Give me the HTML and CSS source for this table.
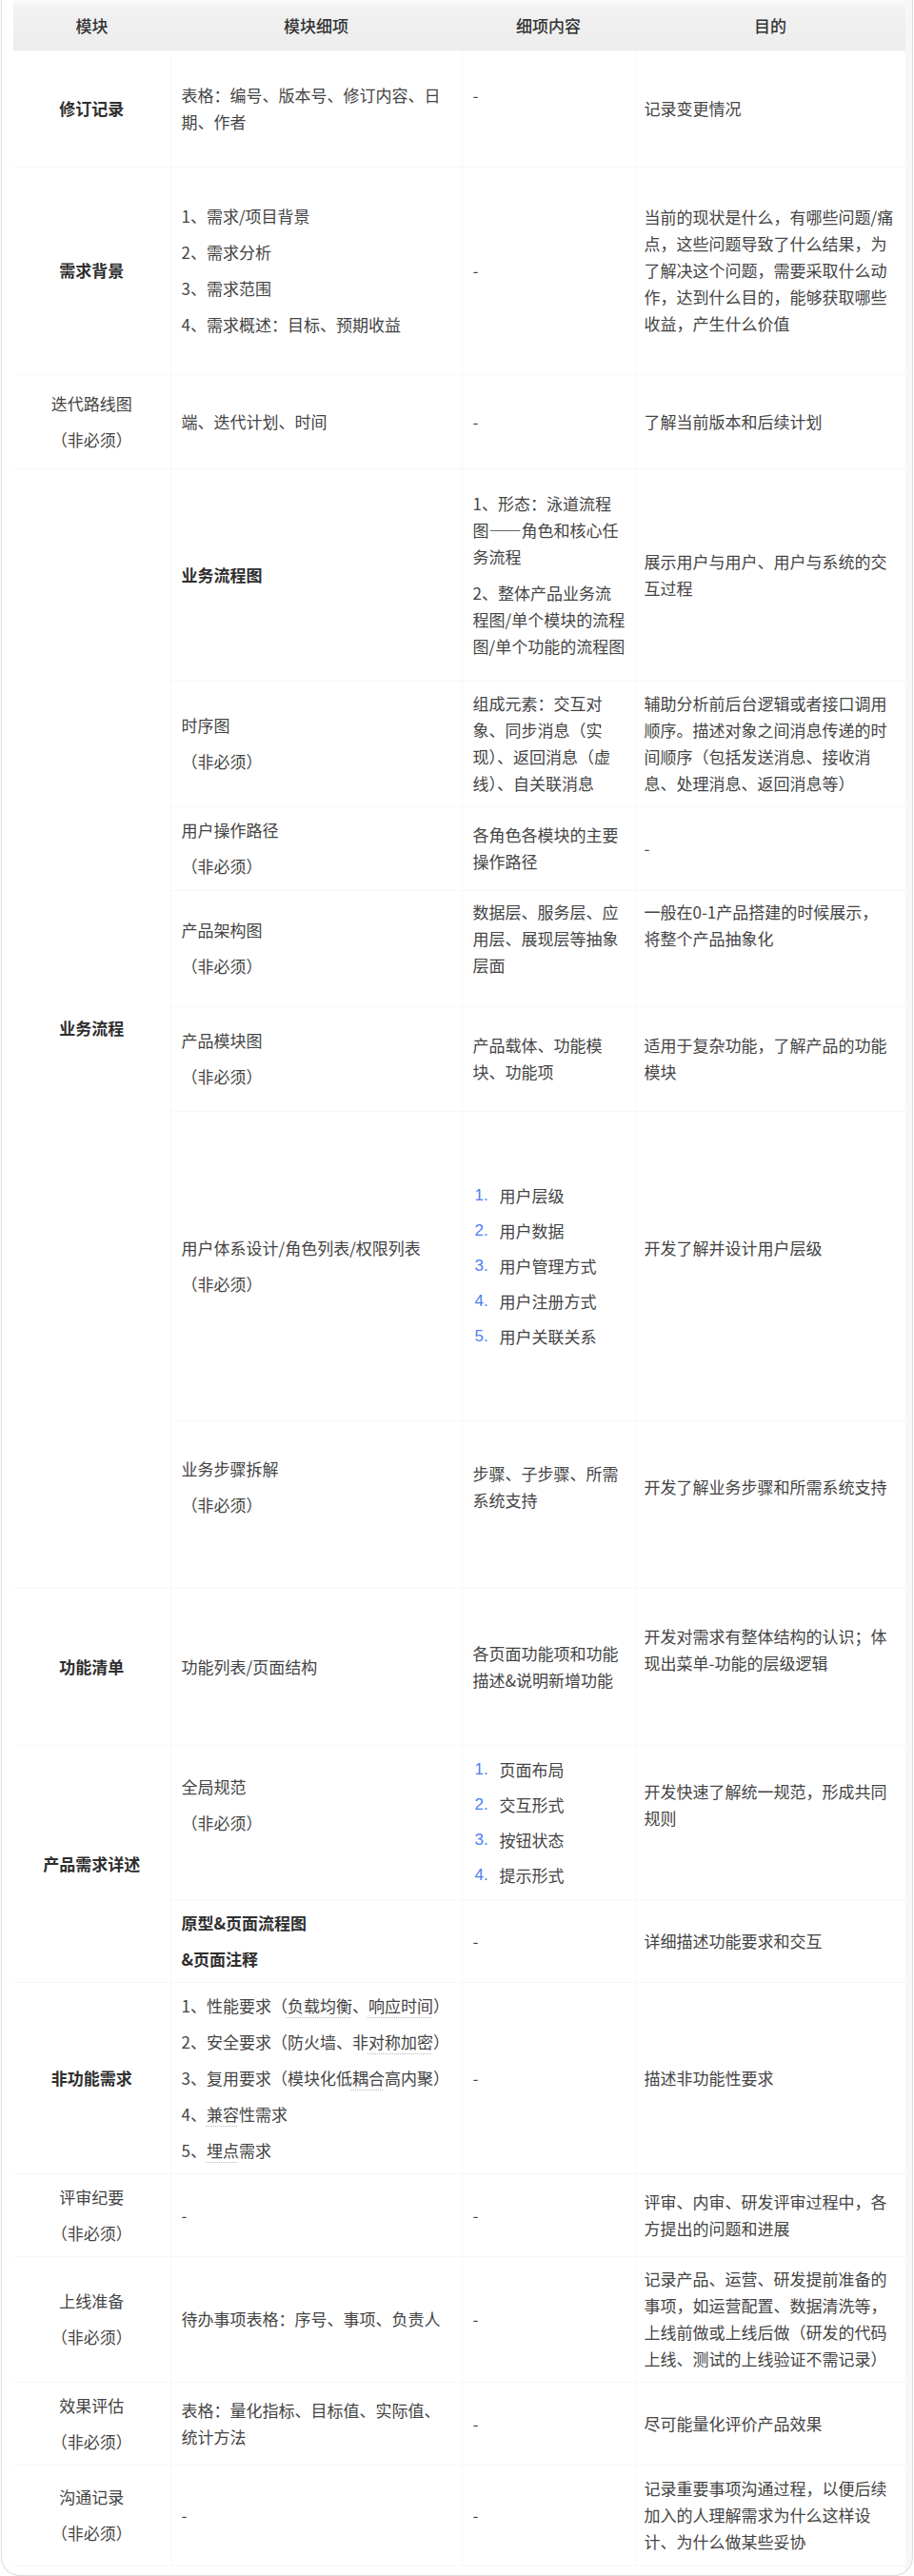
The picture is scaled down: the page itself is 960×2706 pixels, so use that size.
FILE: index.html
```html
<!DOCTYPE html>
<html lang="zh-CN">
<head>
<meta charset="utf-8">
<title>PRD 模块</title>
<link rel="stylesheet" href="styles.css">
</head>
<body>
<div class="frame">
<table class="prd">
<colgroup><col class="w1"><col class="w2"><col class="w3"><col class="w4"></colgroup>
<thead>
<tr class="head"><th>模块</th><th>模块细项</th><th>细项内容</th><th>目的</th></tr>
</thead>
<tbody>
<tr class="h122">
<td class="c1 b">修订记录</td>
<td class="c2">表格：编号、版本号、修订内容、日<br>期、作者</td>
<td class="c3 pb28">-</td>
<td class="c4">记录变更情况</td>
</tr>
<tr class="h218">
<td class="c1 b">需求背景</td>
<td class="c2"><p>1、需求/项目背景</p><p>2、需求分析</p><p>3、需求范围</p><p>4、需求概述：目标、预期收益</p></td>
<td class="c3">-</td>
<td class="c4">当前的现状是什么，有哪些问题/痛<br>点，这些问题导致了什么结果，为<br>了解决这个问题，需要采取什么动<br>作，达到什么目的，能够获取哪些<br>收益，产生什么价值</td>
</tr>
<tr class="h99">
<td class="c1"><p>迭代路线图</p><p>（非必须）</p></td>
<td class="c2">端、迭代计划、时间</td>
<td class="c3">-</td>
<td class="c4">了解当前版本和后续计划</td>
</tr>
<tr class="h223">
<td class="c1 b" rowspan="7">业务流程</td>
<td class="c2 b">业务流程图</td>
<td class="c3"><p>1、形态：泳道流程<br>图——角色和核心任<br>务流程</p><p>2、整体产品业务流<br>程图/单个模块的流程<br>图/单个功能的流程图</p></td>
<td class="c4">展示用户与用户、用户与系统的交<br>互过程</td>
</tr>
<tr class="h132">
<td class="c2"><p>时序图</p><p>（非必须）</p></td>
<td class="c3">组成元素：交互对<br>象、同步消息（实<br>现）、返回消息（虚<br>线）、自关联消息</td>
<td class="c4">辅助分析前后台逻辑或者接口调用<br>顺序。描述对象之间消息传递的时<br>间顺序（包括发送消息、接收消<br>息、处理消息、返回消息等）</td>
</tr>
<tr class="h88">
<td class="c2"><p>用户操作路径</p><p>（非必须）</p></td>
<td class="c3">各角色各模块的主要<br>操作路径</td>
<td class="c4">-</td>
</tr>
<tr class="h122">
<td class="c2"><p>产品架构图</p><p>（非必须）</p></td>
<td class="c3 pb20">数据层、服务层、应<br>用层、展现层等抽象<br>层面</td>
<td class="c4 pb48">一般在0-1产品搭建的时候展示，<br>将整个产品抽象化</td>
</tr>
<tr class="h110">
<td class="c2"><p>产品模块图</p><p>（非必须）</p></td>
<td class="c3">产品载体、功能模<br>块、功能项</td>
<td class="c4">适用于复杂功能，了解产品的功能<br>模块</td>
</tr>
<tr class="h325">
<td class="c2"><p>用户体系设计/角色列表/权限列表</p><p>（非必须）</p></td>
<td class="c3">
<div class="li"><span class="n">1.</span>用户层级</div>
<div class="li"><span class="n">2.</span>用户数据</div>
<div class="li"><span class="n">3.</span>用户管理方式</div>
<div class="li"><span class="n">4.</span>用户注册方式</div>
<div class="li"><span class="n">5.</span>用户关联关系</div>
</td>
<td class="c4 pb38">开发了解并设计用户层级</td>
</tr>
<tr class="h176">
<td class="c2 pb36"><p>业务步骤拆解</p><p>（非必须）</p></td>
<td class="c3 pb36">步骤、子步骤、所需<br>系统支持</td>
<td class="c4 pb36">开发了解业务步骤和所需系统支持</td>
</tr>
<tr class="h165">
<td class="c1 b">功能清单</td>
<td class="c2">功能列表/页面结构</td>
<td class="c3">各页面功能项和功能<br>描述&amp;说明新增功能</td>
<td class="c4 pb36">开发对需求有整体结构的认识；体<br>现出菜单-功能的层级逻辑</td>
</tr>
<tr class="h162">
<td class="c1 b" rowspan="2">产品需求详述</td>
<td class="c2 pb36"><p>全局规范</p><p>（非必须）</p></td>
<td class="c3">
<div class="li"><span class="n">1.</span>页面布局</div>
<div class="li"><span class="n">2.</span>交互形式</div>
<div class="li"><span class="n">3.</span>按钮状态</div>
<div class="li"><span class="n">4.</span>提示形式</div>
</td>
<td class="c4 pb36">开发快速了解统一规范，形成共同<br>规则</td>
</tr>
<tr class="h87">
<td class="c2 b"><p>原型&amp;页面流程图</p><p>&amp;页面注释</p></td>
<td class="c3">-</td>
<td class="c4">详细描述功能要求和交互</td>
</tr>
<tr class="h201">
<td class="c1 b">非功能需求</td>
<td class="c2">
<p>1、性能要求（<span class="u">负载均衡</span>、<span class="u">响应时间</span>）</p>
<p>2、安全要求（防火墙、非<span class="u">对称加密</span>）</p>
<p>3、复用要求（模块化低<span class="u">耦合</span>高内聚）</p>
<p>4、<span class="u">兼容</span>性需求</p>
<p>5、<span class="u">埋点</span>需求</p>
</td>
<td class="c3">-</td>
<td class="c4">描述非功能性要求</td>
</tr>
<tr class="h87">
<td class="c1"><p>评审纪要</p><p>（非必须）</p></td>
<td class="c2">-</td>
<td class="c3">-</td>
<td class="c4">评审、内审、研发评审过程中，各<br>方提出的问题和进展</td>
</tr>
<tr class="h132">
<td class="c1"><p>上线准备</p><p>（非必须）</p></td>
<td class="c2">待办事项表格：序号、事项、负责人</td>
<td class="c3">-</td>
<td class="c4">记录产品、运营、研发提前准备的<br>事项，如运营配置、数据清洗等，<br>上线前做或上线后做（研发的代码<br>上线、测试的上线验证不需记录）</td>
</tr>
<tr class="h87">
<td class="c1"><p>效果评估</p><p>（非必须）</p></td>
<td class="c2">表格：量化指标、目标值、实际值、<br>统计方法</td>
<td class="c3">-</td>
<td class="c4">尽可能量化评价产品效果</td>
</tr>
<tr class="h106">
<td class="c1"><p>沟通记录</p><p>（非必须）</p></td>
<td class="c2">-</td>
<td class="c3">-</td>
<td class="c4">记录重要事项沟通过程，以便后续<br>加入的人理解需求为什么这样设<br>计、为什么做某些妥协</td>
</tr>
</tbody>
</table>
</div>
</body>
</html>
```

FILE: styles.css
```css
html, body {
  margin: 0;
  padding: 0;
  background: #ffffff;
}

body {
  font-family: "Noto Sans CJK SC", "Noto Sans", "Liberation Sans", sans-serif;
  font-size: 17px;
  line-height: 28px;
  color: #444444;
}

.frame {
  box-sizing: border-box;
  width: 958px;
  height: 2706px;
  margin-left: 1px;
  padding-left: 12px;
  border-left: 1px solid #dcdcdc;
  border-right: 1px solid #dcdcdc;
  border-bottom: 1px solid #dcdcdc;
  border-radius: 0 0 20px 20px;
  background: linear-gradient(to right, #ffffff 949px, #f7f7f7 949px);
  overflow: hidden;
}

.prd {
  width: 937px;
  table-layout: fixed;
  border-collapse: collapse;
  background: #ffffff;
}

.w1 { width: 165px; }
.w2 { width: 306px; }
.w3 { width: 182px; }
.w4 { width: 284px; }

.head {
  height: 53px;
}

.head th {
  padding: 2px 0 0 0;
  font-weight: 500;
  color: #333333;
  text-align: center;
  vertical-align: middle;
  background: linear-gradient(to bottom, #fbfbfb 0px, #f1f1f1 10px, #ededed 53px);
  border: none;
}

.prd td {
  padding: 0 10px;
  vertical-align: middle;
  white-space: nowrap;
  border: 1px solid #f7f7f7;
}

.prd tr td:first-child { border-left: none; }
.prd tr td:last-child { border-right: none; }

.prd p {
  margin: 0;
}

.prd p + p {
  margin-top: 10px;
}

.c1 {
  text-align: center;
}

.prd td.c2 { padding-left: 11px; }
.prd td.c3 { padding-left: 11px; padding-right: 11px; }
.prd td.c4 { padding-left: 9px; }

.b {
  font-weight: 700;
  color: #2e2e2e;
}

.li {
  display: flex;
}

.li + .li {
  margin-top: 9px;
}

.n {
  width: 28px;
  flex: none;
  padding-left: 2px;
  box-sizing: border-box;
  color: #4d7ef2;
  font-family: "Liberation Sans", "Noto Sans", sans-serif;
}

.u {
  text-decoration-line: underline;
  text-decoration-style: dotted;
  text-decoration-color: #b8b8b8;
  text-decoration-thickness: 1px;
  text-underline-offset: 5px;
}

.prd td.pb20 { padding-bottom: 20px; }
.prd td.pb28 { padding-bottom: 28px; }
.prd td.pb36 { padding-bottom: 36px; }
.prd td.pb38 { padding-bottom: 38px; }
.prd td.pb48 { padding-bottom: 48px; }

.h87 { height: 87px; }
.h88 { height: 88px; }
.h99 { height: 99px; }
.h106 { height: 106px; }
.h110 { height: 110px; }
.h122 { height: 122px; }
.h132 { height: 132px; }
.h162 { height: 162px; }
.h165 { height: 165px; }
.h176 { height: 176px; }
.h201 { height: 201px; }
.h218 { height: 218px; }
.h223 { height: 223px; }
.h325 { height: 325px; }
```
